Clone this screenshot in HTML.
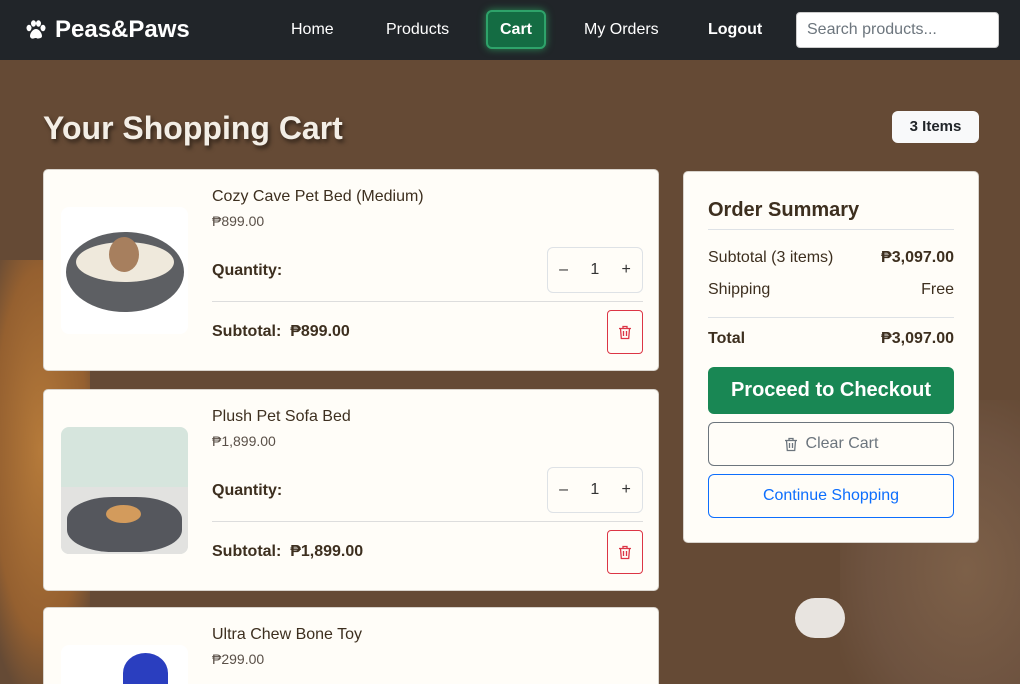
<!DOCTYPE html>
<html><head><meta charset="utf-8"><style>
*{box-sizing:border-box;margin:0;padding:0}
html,body{width:1020px;height:684px;overflow:hidden}
body{background:#654a35;font-family:"Liberation Sans",sans-serif;position:relative;color:#3d2f1f}
nav{position:absolute;top:0;left:0;width:1020px;height:60px;background:#212529}
.logo{position:absolute;left:25px;top:16px;color:#fff;font-weight:bold;font-size:24px;display:flex;align-items:center;gap:8px}
.nl{position:absolute;top:21px;color:#fff;font-size:16px}
.cart{position:absolute;left:486px;top:10px;width:60px;height:39px;background:#146c43;border:2px solid #2ea36a;border-radius:6px;color:#fff;font-weight:bold;font-size:16px;text-align:center;line-height:35px;box-shadow:0 0 8px #2a8a55}
.search{position:absolute;left:796px;top:12px;width:203px;height:36px;background:#fff;border-radius:4px;border:1px solid #ccc;color:#6c757d;font-size:16px;padding:8px 10px}
h1{position:absolute;left:43px;top:110px;font-size:32px;color:#f3eee6;text-shadow:2px 3px 4px rgba(0,0,0,.5)}
.badge{position:absolute;left:892px;top:111px;width:87px;height:32px;background:#f8f9fa;border-radius:6px;font-weight:bold;font-size:15px;text-align:center;line-height:32px;color:#212529}
.card{position:absolute;left:43px;width:616px;height:202px;background:#fffdf8;border:1px solid #d8d3cc;border-radius:5px;overflow:hidden}
.img{position:absolute;left:17px;top:37px;width:127px;height:127px;border-radius:8px;background:#fff;overflow:hidden}
.t{position:absolute;left:168px;top:18px;font-size:16px}
.p{position:absolute;left:168px;top:43px;font-size:14px;color:#5a5048}
.q{position:absolute;left:168px;top:92px;font-size:16px;font-weight:bold}
.qty{position:absolute;left:503px;top:77px;width:96px;height:46px;border:1px solid #dee2e6;border-radius:6px;font-size:16px;display:flex;justify-content:space-around;align-items:center;color:#333}
.hr{position:absolute;left:168px;top:131px;width:431px;border-top:1px solid #ddd}
.st{position:absolute;left:168px;top:153px;font-size:16px;font-weight:bold}
.del{position:absolute;left:563px;top:140px;width:36px;height:44px;border:1px solid #dc3545;border-radius:4px;display:flex;align-items:center;justify-content:center}
.sum{position:absolute;left:683px;top:171px;width:296px;height:372px;background:#fffdf8;border:1px solid #d8d3cc;border-radius:5px}
.sum .r{position:absolute;left:24px;right:24px;font-size:16px;display:flex;justify-content:space-between}
.btn{position:absolute;left:24px;width:246px;border-radius:6px;text-align:center;font-size:16px;display:flex;align-items:center;justify-content:center;gap:8px}
</style></head><body>
<div style="position:absolute;left:-20px;top:260px;width:110px;height:424px;background:radial-gradient(ellipse at 55% 45%,#b57a3a 0%,#956030 55%,rgba(101,74,53,0) 78%)"></div>
<div style="position:absolute;left:840px;top:400px;width:180px;height:284px;background:radial-gradient(ellipse at 70% 60%,#7d6048 0%,#6e5340 55%,rgba(101,74,53,0) 80%)"></div>
<div style="position:absolute;left:795px;top:598px;width:50px;height:40px;background:#e8e4e0;border-radius:20px"></div>
<nav>
<div class="logo"><svg width="22" height="20" viewBox="0 0 22 20" fill="#fff"><ellipse cx="4" cy="8" rx="2.5" ry="3.2"/><ellipse cx="8.5" cy="3.5" rx="2.5" ry="3.2"/><ellipse cx="13.5" cy="3.5" rx="2.5" ry="3.2"/><ellipse cx="18" cy="8" rx="2.5" ry="3.2"/><path d="M11 9c-3 0-6 4-6 7 0 2 2 3 3.5 2.5S10 18 11 18s1 .8 2.5.5S17 18 17 16c0-3-3-7-6-7z"/></svg>Peas&amp;Paws</div>
<div class="nl" style="left:291px">Home</div>
<div class="nl" style="left:386px">Products</div>
<div class="cart">Cart</div>
<div class="nl" style="left:584px">My Orders</div>
<div class="nl" style="left:708px;font-weight:bold">Logout</div>
<div class="search">Search products...</div>
</nav>
<h1>Your Shopping Cart</h1>
<div class="badge">3 Items</div>

<div class="card" style="top:169px">
<div class="img"><div style="position:absolute;left:5px;top:25px;width:118px;height:80px;border-radius:50%;background:#5d5f63"></div><div style="position:absolute;left:15px;top:35px;width:98px;height:40px;border-radius:50%;background:#efe9dc"></div><div style="position:absolute;left:48px;top:30px;width:30px;height:35px;border-radius:50%;background:#a77f5e"></div></div>
<div class="t">Cozy Cave Pet Bed (Medium)</div><div class="p">₱899.00</div>
<div class="q">Quantity:</div><div class="qty"><span>–</span><span>1</span><span>+</span></div>
<div class="hr"></div><div class="st">Subtotal:&nbsp; ₱899.00</div><div class="del"><svg width="14" height="15" viewBox="0 0 14 15" fill="none" stroke="#dc3545" stroke-width="1.3"><path d="M1 3.5h12M5 3.5V1.5h4v2M2.5 3.5l.8 10h7.4l.8-10M5.5 6v5M8.5 6v5"/></svg></div>
</div>
<div class="card" style="top:389px">
<div class="img" style="background:#d6e5dd"><div style="position:absolute;left:0;top:60px;width:127px;height:67px;background:#e2e2e0"></div><div style="position:absolute;left:6px;top:70px;width:115px;height:55px;border-radius:40%;background:#55575d"></div><div style="position:absolute;left:45px;top:78px;width:35px;height:18px;border-radius:50%;background:#d39b5c"></div></div>
<div class="t">Plush Pet Sofa Bed</div><div class="p">₱1,899.00</div>
<div class="q">Quantity:</div><div class="qty"><span>–</span><span>1</span><span>+</span></div>
<div class="hr"></div><div class="st">Subtotal:&nbsp; ₱1,899.00</div><div class="del"><svg width="14" height="15" viewBox="0 0 14 15" fill="none" stroke="#dc3545" stroke-width="1.3"><path d="M1 3.5h12M5 3.5V1.5h4v2M2.5 3.5l.8 10h7.4l.8-10M5.5 6v5M8.5 6v5"/></svg></div>
</div>
<div class="card" style="top:607px;height:77px;border-bottom:none;border-radius:5px 5px 0 0">
<div class="img"><div style="position:absolute;left:62px;top:8px;width:45px;height:40px;border-radius:50% 50% 20% 20%;background:#2a3ebf"></div></div>
<div class="t">Ultra Chew Bone Toy</div><div class="p">₱299.00</div>
</div>

<div class="sum">
<div style="position:absolute;left:24px;top:27px;font-size:20px;font-weight:bold">Order Summary</div>
<div style="position:absolute;left:24px;right:24px;top:57px;border-top:1px solid #dee2e6"></div>
<div class="r" style="top:77px"><span>Subtotal (3 items)</span><b>₱3,097.00</b></div>
<div class="r" style="top:109px"><span>Shipping</span><span>Free</span></div>
<div style="position:absolute;left:24px;right:24px;top:145px;border-top:1px solid #dee2e6"></div>
<div class="r" style="top:158px;font-weight:bold"><span>Total</span><span>₱3,097.00</span></div>
<div class="btn" style="top:195px;height:47px;background:#198754;color:#fff;font-weight:bold;font-size:20px">Proceed to Checkout</div>
<div class="btn" style="top:250px;height:44px;border:1px solid #6c757d;color:#6c757d"><svg width="14" height="15" viewBox="0 0 14 15" fill="none" stroke="#6c757d" stroke-width="1.3"><path d="M1 3.5h12M5 3.5V1.5h4v2M2.5 3.5l.8 10h7.4l.8-10M5.5 6v5M8.5 6v5"/></svg>Clear Cart</div>
<div class="btn" style="top:302px;height:44px;border:1px solid #0d6efd;color:#0d6efd">Continue Shopping</div>
</div>
</body></html>
